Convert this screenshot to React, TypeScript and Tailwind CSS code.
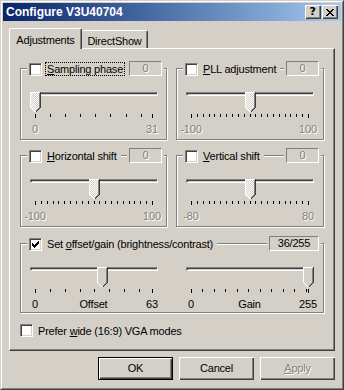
import type { ReactNode } from "react";

const grayText = "text-[#808080] [text-shadow:1px_1px_0_#fff]";

function Checkbox({ checked = false }: { checked?: boolean }) {
  return (
    <div className="w-[13px] h-[13px] shrink-0 bg-white border border-t-[#808080] border-l-[#808080] border-r-white border-b-white shadow-[inset_1px_1px_0_#404040,inset_-1px_-1px_0_#D4D0C8] flex items-center justify-center">
      {checked && (
        <svg width="7" height="7" viewBox="0 0 7 7" shapeRendering="crispEdges">
          {[2, 3, 4, 3, 2, 1, 0].map((y, x) => (
            <rect key={x} x={x} y={y} width="1" height="3" fill="#000" />
          ))}
        </svg>
      )}
    </div>
  );
}

function Label({ text, accel, focus }: { text: string; accel: number; focus?: boolean }) {
  return (
    <span
      className={`ml-[3px] h-[14px] px-[1px] leading-[12px] border border-dotted whitespace-nowrap ${
        focus ? "border-black" : "border-transparent"
      }`}
    >
      {text.slice(0, accel)}
      <span className="underline underline-offset-[1px]">{text[accel]}</span>
      {text.slice(accel + 1)}
    </span>
  );
}

function Thumb({ left, disabled }: { left: number; disabled?: boolean }) {
  return (
    <svg
      className="absolute top-0"
      style={{ left }}
      width="11"
      height="21"
      viewBox="0 0 11 21"
      shapeRendering="crispEdges"
    >
      <path d="M0 0H11V15.5L5.5 21L0 15.5Z" fill={disabled ? "url(#dither)" : "#D4D0C8"} />
      <path d="M0.5 15.5V0.5H10" stroke="#fff" fill="none" />
      <path d="M0.5 15.5L5 20" stroke="#fff" fill="none" />
      <path d="M10.5 0V15.5L5.5 20.5" stroke="#404040" fill="none" />
      <path d="M9.5 1V15.5L5.5 19.5" stroke="#808080" fill="none" />
    </svg>
  );
}

type SliderProps = {
  min: number;
  max: number;
  value: number;
  step: number;
  left: string;
  right: string;
  mid?: string;
  disabled?: boolean;
};

function Slider({ min, max, value, step, left, right, mid, disabled }: SliderProps) {
  const pos = (v: number) => Math.round(((v - min) / (max - min)) * 117);
  const ticks: number[] = [];
  for (let v = min; v < max; v += step) ticks.push(v);
  ticks.push(max);

  return (
    <div className="w-[146px] shrink-0">
      <div className="relative h-[21px]">
        <div className="ml-[9px] mt-[5px] w-[128px] h-[4px] border border-t-[#808080] border-l-[#808080] border-r-white border-b-white shadow-[inset_1px_1px_0_#404040]" />
        <Thumb left={9 + pos(value)} disabled={disabled} />
      </div>
      <div className="relative h-[4px] mt-[1px]">
        {ticks.map((v, i) => (
          <div
            key={v}
            className={`absolute top-0 w-px bg-black ${
              i === 0 || i === ticks.length - 1 ? "h-[4px]" : "h-[3px]"
            }`}
            style={{ left: 14 + pos(v) }}
          />
        ))}
      </div>
      <div
        className={`ml-[2px] mt-[5px] w-[141px] h-[13px] leading-[13px] flex justify-between whitespace-nowrap ${
          disabled ? grayText : ""
        }`}
      >
        <span className="w-[24px] flex justify-center">{left}</span>
        {mid && <span>{mid}</span>}
        <span className="w-[24px] flex justify-center">{right}</span>
      </div>
    </div>
  );
}

type GroupProps = {
  className: string;
  label: string;
  accel: number;
  checked?: boolean;
  focus?: boolean;
  valueText: string;
  valueWidth: string;
  children: ReactNode;
};

function Group({ className, label, accel, checked, focus, valueText, valueWidth, children }: GroupProps) {
  return (
    <div
      className={`relative shrink-0 border border-[#808080] shadow-[inset_1px_1px_0_#fff,1px_1px_0_#fff] ${className}`}
    >
      <div className="absolute -top-[7px] left-[6px] h-[14px] px-[2px] flex items-center bg-[#D4D0C8]">
        <Checkbox checked={checked} />
        <Label text={label} accel={accel} focus={focus} />
      </div>
      <div className="absolute -top-[8px] right-[2px] px-[2px] bg-[#D4D0C8]">
        <div
          className={`${valueWidth} h-[15px] border border-t-[#808080] border-l-[#808080] border-r-white border-b-white flex items-center justify-center leading-[13px] ${
            checked ? "text-black" : grayText
          }`}
        >
          {valueText}
        </div>
      </div>
      <div className="flex gap-[10px] mt-[18px]">{children}</div>
    </div>
  );
}

function PushButton({ children, isDefault, disabled }: { children: ReactNode; isDefault?: boolean; disabled?: boolean }) {
  return (
    <div
      className={`w-[75px] h-[23px] flex items-center justify-center ${
        isDefault
          ? "border border-black shadow-[inset_1px_1px_0_#fff,inset_-1px_-1px_0_#404040,inset_-2px_-2px_0_#808080]"
          : "shadow-[inset_1px_1px_0_#fff,inset_-1px_-1px_0_#404040,inset_-2px_-2px_0_#808080]"
      } ${disabled ? grayText : ""}`}
    >
      {children}
    </div>
  );
}

function CaptionButton({ children }: { children: ReactNode }) {
  return (
    <div className="w-[16px] h-[14px] bg-[#D4D0C8] flex items-center justify-center shadow-[inset_1px_1px_0_#fff,inset_-1px_-1px_0_#404040,inset_-2px_-2px_0_#808080]">
      {children}
    </div>
  );
}

export default function App() {
  return (
    <div className="w-[344px] h-[390px] bg-[#D4D0C8] text-black text-[11px] tracking-[-0.2px] font-['Liberation_Sans',Arial,sans-serif] border border-t-[#D4D0C8] border-l-[#D4D0C8] border-r-[#404040] border-b-[#404040]">
      <svg width="0" height="0" className="absolute">
        <defs>
          <pattern id="dither" width="2" height="2" patternUnits="userSpaceOnUse">
            <rect width="2" height="2" fill="#D4D0C8" />
            <rect width="1" height="1" fill="#fff" />
            <rect x="1" y="1" width="1" height="1" fill="#fff" />
          </pattern>
        </defs>
      </svg>
      <div className="h-full border border-t-white border-l-white border-r-[#808080] border-b-[#808080] p-px">
        {/* title bar */}
        <div className="h-[18px] flex items-center justify-between pl-[3px] pr-[3px] bg-linear-to-r from-[#0A246A] to-[#A6CAF0]">
          <span className="text-white font-bold text-[12px] tracking-normal leading-[18px]">Configure V3U40704</span>
          <div className="flex gap-px">
            <CaptionButton>
              <span className="font-bold text-[11px] leading-[12px] font-['DejaVu_Sans',sans-serif] pr-px">?</span>
            </CaptionButton>
            <CaptionButton>
              <svg width="8" height="7" viewBox="0 0 8 7" shapeRendering="crispEdges">
                {[0, 1, 2, 3, 4, 5, 6].map((i) => (
                  <g key={i}>
                    <rect x={i} y={i} width="2" height="1" fill="#000" />
                    <rect x={6 - i} y={i} width="2" height="1" fill="#000" />
                  </g>
                ))}
              </svg>
            </CaptionButton>
          </div>
        </div>

        <div className="px-[6px] pt-[7px]">
          {/* tabs */}
          <div className="flex items-end h-[20px]">
            <div className="relative z-10 w-[73px] h-[21px] -mb-px bg-[#D4D0C8] rounded-t-[2px] border-t border-l border-t-white border-l-white border-r border-r-[#404040] shadow-[inset_-1px_0_0_#808080] flex justify-center pt-[3px]">
              Adjustments
            </div>
            <div className="w-[66px] h-[18px] rounded-t-[2px] border-t border-t-white border-r border-r-[#404040] shadow-[inset_-1px_0_0_#808080] flex justify-center pt-[2px]">
              DirectShow
            </div>
          </div>

          {/* panel */}
          <div className="h-[303px] border border-t-white border-l-white border-r-[#404040] border-b-[#404040] shadow-[inset_-1px_-1px_0_#808080] pl-[10px] pt-[19px]">
            <div className="flex gap-[9px]">
              <Group className="w-[147px] h-[72px]" label="Sampling phase" accel={0} focus valueText="0" valueWidth="w-[33px]">
                <Slider min={0} max={31} value={0} step={4} left="0" right="31" disabled />
              </Group>
              <Group className="w-[148px] h-[72px]" label="PLL adjustment" accel={0} valueText="0" valueWidth="w-[33px]">
                <Slider min={-100} max={100} value={0} step={10} left="-100" right="100" disabled />
              </Group>
            </div>
            <div className="flex gap-[9px] mt-[15px]">
              <Group className="w-[147px] h-[72px]" label="Horizontal shift" accel={0} valueText="0" valueWidth="w-[33px]">
                <Slider min={-100} max={100} value={0} step={10} left="-100" right="100" disabled />
              </Group>
              <Group className="w-[148px] h-[72px]" label="Vertical shift" accel={0} valueText="0" valueWidth="w-[33px]">
                <Slider min={-80} max={80} value={0} step={8} left="-80" right="80" disabled />
              </Group>
            </div>
            <div className="mt-[16px]">
              <Group
                className="w-[304px] h-[70px]"
                label="Set offset/gain (brightness/contrast)"
                accel={4}
                checked
                valueText="36/255"
                valueWidth="w-[50px]"
              >
                <Slider min={0} max={63} value={36} step={8} left="0" mid="Offset" right="63" />
                <Slider min={0} max={255} value={255} step={25} left="0" mid="Gain" right="255" />
              </Group>
            </div>
            <div className="mt-[11px] flex items-center h-[13px]">
              <Checkbox />
              <Label text="Prefer wide (16:9) VGA modes" accel={7} />
            </div>
          </div>

          {/* buttons */}
          <div className="mt-[6px] flex justify-end gap-[6px]">
            <PushButton isDefault>OK</PushButton>
            <PushButton>Cancel</PushButton>
            <PushButton disabled>
              <span>
                <span className="underline underline-offset-[1px]">A</span>pply
              </span>
            </PushButton>
          </div>
        </div>
      </div>
    </div>
  );
}
